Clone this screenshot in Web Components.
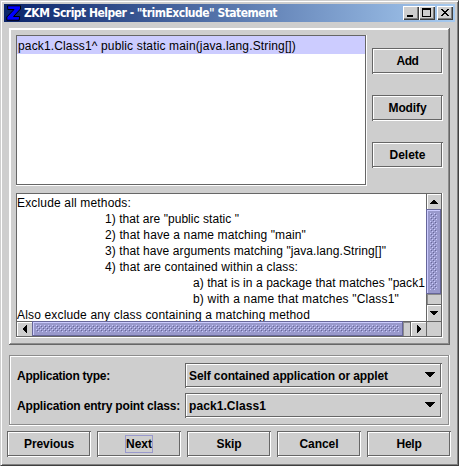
<!DOCTYPE html>
<html lang="en"><head><meta charset="utf-8"><title>ZKM Script Helper</title>
<style>
html,body{margin:0;height:100%;overflow:hidden}
body{font:12px/16px "Liberation Sans",Arial,sans-serif;color:#000;--face:#cecece;--dark:#666}
.list-row{display:flex;gap:5px;height:151px}
.side{display:flex;flex-direction:column;gap:21px;padding-top:13px}
.row{display:flex;align-items:center;height:25px}
.row fit-text{flex:none}
.row metal-combo{margin-left:auto}
.form{display:flex;flex-direction:column;gap:5px}
.actions{display:flex;gap:6px;padding:5px 0 0 3px}
.l1{padding-left:88px}.l2{padding-left:176px}
.doc>div{height:16px;white-space:nowrap}
.sel{background:#ccccff;height:18px;line-height:20px;padding-left:1px}
</style></head><body>
<win-frame>
  <fit-text slot="title" w="253">ZKM Script Helper - "trimExclude" Statement</fit-text>
  <metal-panel kind="raised">
    <div class="list-row">
      <sunken-box style="width:351px;height:151px;flex:none"><div class="sel"><fit-text w="278">pack1.Class1^ public static main(java.lang.String[])</fit-text></div></sunken-box>
      <div class="side">
        <metal-button style="width:71px"><fit-text w="22">Add</fit-text></metal-button>
        <metal-button style="width:71px"><fit-text w="38">Modify</fit-text></metal-button>
        <metal-button style="width:71px"><fit-text w="36">Delete</fit-text></metal-button>
      </div>
    </div>
    <sunken-box style="width:427px;height:145px;margin-top:7px">
      <scroll-view>
        <div class="doc">
          <div><fit-text w="114">Exclude all methods:</fit-text></div>
          <div class="l1"><fit-text w="134">1) that are "public static "</fit-text></div>
          <div class="l1"><fit-text w="201">2) that have a name matching "main"</fit-text></div>
          <div class="l1"><fit-text w="281">3) that have arguments matching "java.lang.String[]"</fit-text></div>
          <div class="l1"><fit-text w="193">4) that are contained within a class:</fit-text></div>
          <div class="l2"><fit-text w="232">a) that is in a package that matches "pack1</fit-text></div>
          <div class="l2"><fit-text w="206">b) with a name that matches "Class1"</fit-text></div>
          <div><fit-text w="293">Also exclude any class containing a matching method</fit-text></div>
        </div>
      </scroll-view>
    </sunken-box>
  </metal-panel>
  <metal-panel kind="etched">
    <div class="form">
      <div class="row"><fit-text b w="93">Application type:</fit-text><metal-combo><fit-text w="199">Self contained application or applet</fit-text></metal-combo></div>
      <div class="row"><fit-text b w="163">Application entry point class:</fit-text><metal-combo><fit-text w="77">pack1.Class1</fit-text></metal-combo></div>
    </div>
  </metal-panel>
  <div class="actions">
    <metal-button style="width:84px"><fit-text w="50">Previous</fit-text></metal-button>
    <metal-button style="width:84px" focused><fit-text w="26">Next</fit-text></metal-button>
    <metal-button style="width:84px"><fit-text w="25">Skip</fit-text></metal-button>
    <metal-button style="width:84px"><fit-text w="39">Cancel</fit-text></metal-button>
    <metal-button style="width:84px"><fit-text w="25">Help</fit-text></metal-button>
  </div>
</win-frame>
<script>
const define=(name,html,ready)=>customElements.define(name,class extends HTMLElement{
  constructor(){super();this.attachShadow({mode:'open'}).innerHTML=html}
  connectedCallback(){if(ready)ready(this)}
});

define('win-frame',`<style>
:host{display:flex;flex-direction:column;box-sizing:border-box;width:459px;height:466px;background:var(--face);padding:3px 2px 2px 3px;border:1px solid;border-color:var(--face) #404040 #404040 var(--face);box-shadow:inset 1px 1px #fff,inset -1px -1px #808080}
header{display:flex;align-items:center;height:18px;width:451px;background:linear-gradient(90deg,#0a246a,#a6caf0);color:#fff}
.icon{margin:0 2px 0 2px;flex:none}
.title{flex:1;font:bold 12px/18px "DejaVu Sans Condensed","DejaVu Sans",sans-serif}
.c{width:16px;height:14px;box-sizing:border-box;background:var(--face);box-shadow:inset 1px 1px #fff,inset -1px -1px #404040,inset -2px -2px #808080}
.c svg{display:block}
.x{margin:0 2px}
main{display:flex;flex-direction:column;align-items:flex-start;padding:6px 0 0 5px}
::slotted(.actions){margin-left:-5px}
</style>
<header>
<svg class="icon" width="16" height="16"><path d="M1.5 .8H14.5V4L7.5 11.5H13.7L13.2 15.2H.8V12L8 4.5H1.8Z" fill="#00f" stroke="#000"/></svg>
<div class="title"><slot name="title"></slot></div>
<div class="c"><svg width="16" height="14"><path d="M4 9h6v2H4z"/></svg></div>
<div class="c"><svg width="16" height="14"><path d="M3 2h9v9H3zM4 4v6h7V4z" fill-rule="evenodd"/></svg></div>
<div class="c x"><svg width="16" height="14" shape-rendering="crispEdges"><path d="M4 3h2v1h1v1h2V4h1V3h2v1h-1v1h-1v1H9v1h1v1h1v1h1v1h-2V9H9V8H7v1H6v1H4V9h1V8h1V7h1V6H6V5H5V4H4z"/></svg></div>
</header><main><slot></slot></main>`);

define('metal-panel',`<style>
:host{display:block;box-sizing:border-box;width:441px}
:host([kind=raised]){height:317px;padding:7px;box-shadow:inset -1px -1px #666,inset 1px 1px #fff,inset -2px -2px #8c8c8c,inset 2px 2px #fff}
:host([kind=etched]){height:71px;margin-top:10px;padding:8px 8px 0;box-shadow:inset -1px -1px #fff,inset 1px 1px #8c8c8c,inset -2px -2px #8c8c8c,inset 2px 2px #fff}
</style><slot></slot>`);

define('sunken-box',`<style>
:host{display:block;box-sizing:border-box;background:#fff;border:solid #fff;border-width:0 1px 1px 0}
div{height:100%;box-sizing:border-box;border:1px solid var(--dark)}
</style><div><slot></slot></div>`);

define('metal-button',`<style>
:host{display:flex;box-sizing:border-box;height:26px;flex:none;align-items:center;justify-content:center;font-weight:bold;
box-shadow:inset 1px 1px var(--dark),inset -1px -1px #fff,inset -2px -2px var(--dark),inset 2px 2px #fff}
span{display:block;height:16px;padding:1px 1px}
:host([focused]) span{outline:1px solid #9999cc;outline-offset:-1px}
</style><span><slot></slot></span>`);

define('metal-combo',`<style>
:host{display:flex;align-items:center;justify-content:space-between;box-sizing:border-box;width:257px;height:25px;padding:0 7px 0 4px;font-weight:bold;
box-shadow:inset 1px 1px var(--dark),inset -1px -1px #fff,inset -2px -2px var(--dark),inset 2px 2px #fff}
svg{margin-top:-2px}
</style><slot></slot><svg width="10" height="5"><path d="M0 0h10v1H9v1H8v1H7v1H6v1H4V4H3V3H2V2H1V1H0z"/></svg>`);

define('scroll-thumb',`<style>
:host{display:block;box-sizing:border-box;background:#9999cc;border:1px solid #666699;box-shadow:inset 1px 1px #ccccff;padding:3px}
svg{display:block;width:100%;height:100%}
</style><svg shape-rendering="crispEdges"><defs><pattern id="b" width="4" height="4" patternUnits="userSpaceOnUse">
<path fill="#ccccff" d="M0 0h1v1H0zM2 2h1v1H2z"/><path fill="#666699" d="M1 1h1v1H1zM3 3h1v1H3z"/></pattern></defs><rect width="100%" height="100%" fill="url(#b)"/></svg>`);

const arrows={up:'M6 0h2v1h1v1h1v1h1v1H3V3h1V2h1V1h1z',down:'M3 0h8v1h-1v1H9v1H8v1H6V3H5V2H4V1H3z',left:'M4 0v8H3V7H2V6H1V5H0V3h1V2h1V1h1V0z',right:'M0 0h1v1h1v1h1v1h1v2H3v1H2v1H1v1H0z'};
define('scroll-arrow',`<style>
:host{display:flex;align-items:center;justify-content:center;box-sizing:border-box;background:var(--face);box-shadow:inset 1px 1px #fff}
</style>`,el=>{
  const d=el.getAttribute('dir'),v=d==='up'||d==='down';
  el.shadowRoot.innerHTML+=`<svg width="${v?14:4}" height="${v?4:8}"><path d="${arrows[d]}"/></svg>`;
});

define('scroll-view',`<style>
:host{display:grid;grid-template:127px 15px/409px 15px;height:142px}
.view{overflow:hidden;padding-top:1px;height:126px}
.v,.h{display:flex;background:var(--face)}
.v{flex-direction:column;border-left:1px solid var(--dark)}
.h{border-top:1px solid var(--dark)}
.v scroll-arrow{height:15px}.h scroll-arrow{width:15px;height:14px}
.v scroll-thumb{height:85px;margin-left:-1px}
.h scroll-thumb{width:371px;margin-top:-1px;height:15px}
.t{flex:1;box-shadow:inset 1px 1px #8c8c8c}
.v .d,.h .r{border:0 solid var(--dark)}
.v .d{border-top-width:1px;height:17px}.h .r{border-left-width:1px;width:16px}
.corner{background:var(--face);border:solid var(--dark);border-width:1px 0 0 1px}
</style>
<div class="view"><slot></slot></div>
<div class="v"><scroll-arrow dir="up"></scroll-arrow><scroll-thumb></scroll-thumb><div class="t"></div><scroll-arrow class="d" dir="down"></scroll-arrow></div>
<div class="h"><scroll-arrow dir="left"></scroll-arrow><scroll-thumb></scroll-thumb><div class="t"></div><scroll-arrow class="r" dir="right"></scroll-arrow></div>
<div class="corner"></div>`);

/* Text run whose tracking is adjusted so that it spans w pixels. */
define('fit-text',`<style>
:host{display:inline-block;white-space:pre;vertical-align:top}
:host([b]){font-weight:bold}
</style><slot></slot>`,el=>{
  const w=+el.getAttribute('w'),n=el.textContent.length;
  el.style.letterSpacing=(w-el.getBoundingClientRect().width)/n+'px';
});
</script>
</body></html>
